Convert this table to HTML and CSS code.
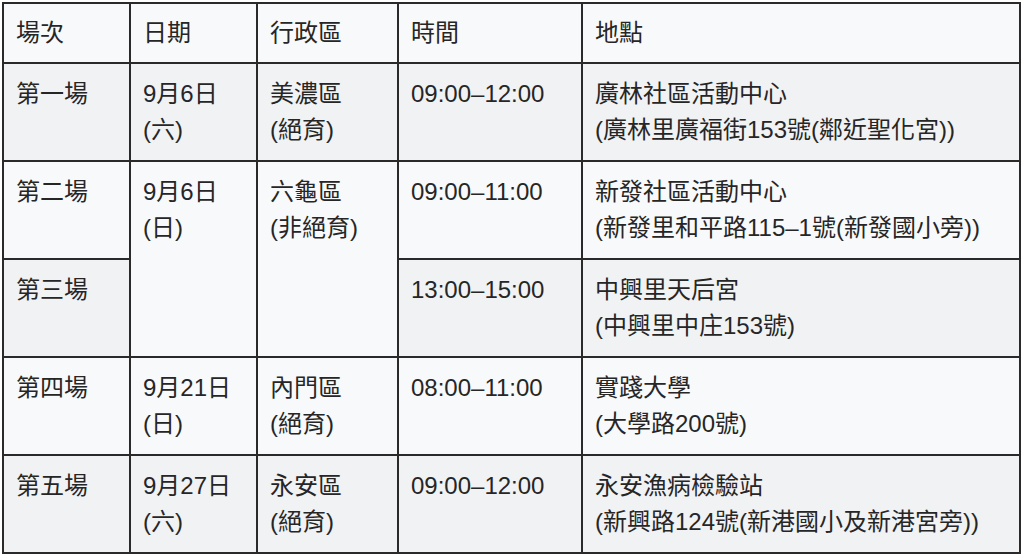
FILE: index.html
```html
<!DOCTYPE html>
<html lang="zh-Hant">
<head>
<meta charset="utf-8">
<link rel="stylesheet" href="styles.css">
</head>
<body>
<table class="schedule">
  <colgroup>
    <col class="c1"><col class="c2"><col class="c3"><col class="c4"><col class="c5">
  </colgroup>
  <thead>
    <tr><th>場次</th><th>日期</th><th>行政區</th><th>時間</th><th>地點</th></tr>
  </thead>
  <tbody>
    <tr class="alt">
      <td>第一場</td><td>9月6日<br>(六)</td><td>美濃區<br>(絕育)</td><td>09:00–12:00</td><td>廣林社區活動中心<br>(廣林里廣福街153號(鄰近聖化宮))</td>
    </tr>
    <tr>
      <td>第二場</td><td rowspan="2">9月6日<br>(日)</td><td rowspan="2">六龜區<br>(非絕育)</td><td>09:00–11:00</td><td>新發社區活動中心<br>(新發里和平路115–1號(新發國小旁))</td>
    </tr>
    <tr class="alt">
      <td>第三場</td><td>13:00–15:00</td><td>中興里天后宮<br>(中興里中庄153號)</td>
    </tr>
    <tr>
      <td>第四場</td><td>9月21日<br>(日)</td><td>內門區<br>(絕育)</td><td>08:00–11:00</td><td>實踐大學<br>(大學路200號)</td>
    </tr>
    <tr class="alt">
      <td>第五場</td><td>9月27日<br>(六)</td><td>永安區<br>(絕育)</td><td>09:00–12:00</td><td>永安漁病檢驗站<br>(新興路124號(新港國小及新港宮旁))</td>
    </tr>
  </tbody>
</table>
</body>
</html>
```
FILE: styles.css
```css
html, body {
  margin: 0;
  padding: 0;
  background: #ffffff;
}
.schedule {
  margin: 2px;
  width: 1017px;
  table-layout: fixed;
  border-collapse: collapse;
  font-family: "Liberation Sans", "Noto Sans CJK TC", sans-serif;
  font-size: 24px;
  line-height: 36px;
  color: #262626;
  background: #f8f9fa;
}
.c1 { width: 127px; }
.c2 { width: 127px; }
.c3 { width: 141px; }
.c4 { width: 184px; }
.c5 { width: 438px; }
.schedule th,
.schedule td {
  border: 2px solid #2a2a2a;
  padding: 12px 12px;
  text-align: left;
  vertical-align: top;
  font-weight: normal;
}
.schedule th {
  padding-top: 11px;
  padding-bottom: 11px;
  background: #f8f9fa;
}
.schedule tr.alt td {
  background: #f1f2f4;
}
```
